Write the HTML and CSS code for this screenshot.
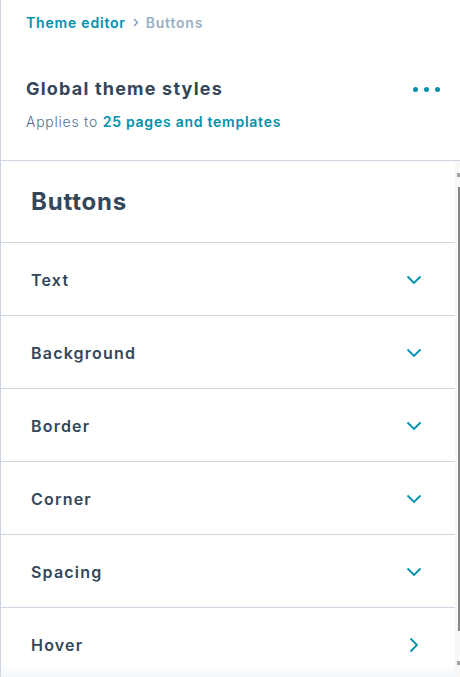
FILE: index.html
```html
<!DOCTYPE html>
<html lang="en">
<head>
<meta charset="utf-8">
<title>Buttons – Theme editor</title>
<link rel="stylesheet" href="styles.css">
</head>
<body>
<div class="panel">
  <header class="header">
    <nav class="crumbs">
      <a class="crumb-link">Theme editor</a>
      <svg class="crumb-sep" width="6" height="9" viewBox="0 0 6 9"><path d="M1 1l3.5 3.5L1 8" fill="none" stroke="#7c98b6" stroke-width="1.3"/></svg>
      <span class="crumb-current">Buttons</span>
    </nav>
    <div class="title-row">
      <h1 class="title">Global theme styles</h1>
      <button class="more" aria-label="More">
        <span class="dot"></span><span class="dot"></span><span class="dot"></span>
      </button>
    </div>
    <p class="subtitle">Applies to <a class="sub-link">25 pages and templates</a></p>
  </header>
  <div class="scroll">
    <div class="content">
      <h2 class="section-title">Buttons</h2>
      <div class="row"><span class="row-label">Text</span><svg class="chev" width="16" height="10" viewBox="0 0 16 10"><path d="M1.5 1.5L8 8l6.5-6.5" fill="none" stroke="#0091ae" stroke-width="1.8"/></svg></div>
      <div class="row"><span class="row-label">Background</span><svg class="chev" width="16" height="10" viewBox="0 0 16 10"><path d="M1.5 1.5L8 8l6.5-6.5" fill="none" stroke="#0091ae" stroke-width="1.8"/></svg></div>
      <div class="row"><span class="row-label">Border</span><svg class="chev" width="16" height="10" viewBox="0 0 16 10"><path d="M1.5 1.5L8 8l6.5-6.5" fill="none" stroke="#0091ae" stroke-width="1.8"/></svg></div>
      <div class="row"><span class="row-label">Corner</span><svg class="chev" width="16" height="10" viewBox="0 0 16 10"><path d="M1.5 1.5L8 8l6.5-6.5" fill="none" stroke="#0091ae" stroke-width="1.8"/></svg></div>
      <div class="row"><span class="row-label">Spacing</span><svg class="chev" width="16" height="10" viewBox="0 0 16 10"><path d="M1.5 1.5L8 8l6.5-6.5" fill="none" stroke="#0091ae" stroke-width="1.8"/></svg></div>
      <div class="row row-last"><span class="row-label">Hover</span><svg class="chev-right" width="10" height="16" viewBox="0 0 10 16"><path d="M1.5 1.5L8 8l-6.5 6.5" fill="none" stroke="#0091ae" stroke-width="1.8"/></svg></div>
      <div class="fade"></div>
    </div>
    <div class="scrollbar">
      <div class="sb-arrow"></div>
      <div class="sb-thumb"></div>
      <div class="sb-arrow"></div>
    </div>
  </div>
</div>
</body>
</html>
```
FILE: styles.css
```css
* { box-sizing: border-box; }
html, body {
  margin: 0;
  padding: 0;
  background: #ffffff;
}
body {
  font-family: "Inter", "Open Sans", sans-serif;
  color: #33475b;
}
.panel {
  height: 677px;
  border-left: 1px solid #cbd6e2;
  display: flex;
  flex-direction: column;
  overflow: hidden;
}
.header {
  padding: 13px 20px 28px 25px;
  border-bottom: 1px solid #cbd6e2;
}
.crumbs {
  display: flex;
  align-items: center;
  gap: 7px;
  height: 18px;
  font-size: 14px;
  font-weight: 600;
  letter-spacing: 0.8px;
}
.crumb-link { color: #0091ae; }
.crumb-current { color: #99afc4; }
.crumb-sep { display: block; }
.title-row {
  margin-top: 46px;
  display: flex;
  align-items: center;
  justify-content: space-between;
  height: 24px;
}
.title {
  margin: 0;
  font-size: 18px;
  line-height: 24px;
  font-weight: 700;
  letter-spacing: 1.2px;
  color: #33475b;
}
.more {
  border: 0;
  background: none;
  padding: 0;
  display: flex;
  gap: 6px;
  align-items: center;
}
.dot {
  width: 5px;
  height: 5px;
  border-radius: 50%;
  background: #0091ae;
}
.subtitle {
  margin: 11px 0 0;
  font-size: 14px;
  line-height: 20px;
  font-weight: 300;
  letter-spacing: 0.75px;
  color: #516f90;
}
.sub-link {
  color: #0091ae;
  font-weight: 600;
}
.scroll {
  flex: 1;
  display: flex;
  min-height: 0;
}
.content {
  flex: 1;
  position: relative;
}
.section-title {
  margin: 0;
  padding: 26px 30px 25px;
  font-size: 24px;
  line-height: 30px;
  font-weight: 700;
  letter-spacing: 0.8px;
  color: #33475b;
  border-bottom: 1px solid #cbd6e2;
}
.row {
  height: 73px;
  padding: 1px 33px 0 30px;
  display: flex;
  align-items: center;
  justify-content: space-between;
  border-bottom: 1px solid #cbd6e2;
}
.row-last { border-bottom: 0; }
.row-label {
  font-size: 16px;
  font-weight: 600;
  letter-spacing: 1.2px;
  color: #33475b;
}
.chev { display: block; }
.chev-right { display: block; margin-right: 3px; }
.fade {
  position: absolute;
  left: 0;
  right: 0;
  bottom: 0;
  height: 12px;
  background: linear-gradient(to bottom, rgba(234,240,246,0), rgba(234,240,246,0.6));
}
.scrollbar {
  width: 5px;
  background: #f7f7f7;
  display: flex;
  flex-direction: column;
  align-items: flex-end;
  padding: 12px 0 12px;
}
.sb-arrow {
  width: 3px;
  height: 4px;
  background: #a3a3a3;
}
.sb-thumb {
  margin: 10px 0 30px;
  width: 2px;
  flex: 1;
  background: #858585;
}
```
